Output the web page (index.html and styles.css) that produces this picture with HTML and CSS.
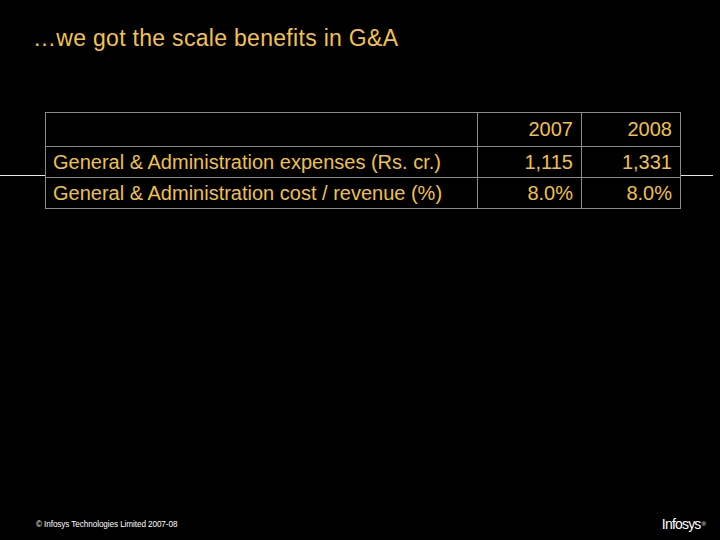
FILE: index.html
```
<!DOCTYPE html>
<html>
<head>
<meta charset="utf-8">
<link rel="stylesheet" href="styles.css">
</head>
<body>
<div class="slide">
  <h1 class="title">…we got the scale benefits in G&amp;A</h1>
  <div class="table-wrap">
    <div class="rule"></div>
    <table class="data">
      <colgroup>
        <col class="c1"><col class="c2"><col class="c3">
      </colgroup>
      <tr class="head"><td></td><td class="num">2007</td><td class="num">2008</td></tr>
      <tr class="row"><td class="label">General &amp; Administration expenses (Rs. cr.)</td><td class="num">1,115</td><td class="num">1,331</td></tr>
      <tr class="row"><td class="label">General &amp; Administration cost / revenue (%)</td><td class="num">8.0%</td><td class="num">8.0%</td></tr>
    </table>
  </div>
  <div class="spacer"></div>
  <footer class="footer">
    <span class="copy">© Infosys Technologies Limited 2007-08</span>
    <span class="logo">Infosys<sup class="reg">®</sup></span>
  </footer>
</div>
</body>
</html>
```
FILE: styles.css
```
html, body {
  margin: 0;
  padding: 0;
  background: #000;
}
.slide {
  width: 720px;
  height: 540px;
  display: flex;
  flex-direction: column;
  font-family: "Liberation Sans", Arial, sans-serif;
  background: #000;
  overflow: hidden;
}
.title {
  margin: 0;
  padding: 25px 0 0 33px;
  font-size: 23px;
  font-weight: normal;
  line-height: 26px;
  letter-spacing: 0.3px;
  color: #f2c24a;
}
.table-wrap {
  position: relative;
  margin: 61px 0 0 45px;
  width: 635px;
}
.rule {
  position: absolute;
  left: -45px;
  top: 63px;
  width: 713px;
  height: 1px;
  background: #e8e8e8;
}
.data {
  position: relative;
  z-index: 1;
  background: #000;
  border-collapse: collapse;
  table-layout: fixed;
  width: 635px;
  font-size: 20px;
  color: #efc04a;
}
.c1 { width: 432px; }
.c2 { width: 104px; }
.c3 { width: 99px; }
.data td {
  border: 1px solid #8a8a8a;
  padding: 0 8px 0 7px;
  white-space: nowrap;
  vertical-align: middle;
}
.head td {
  line-height: 33px;
}
.row td {
  line-height: 30px;
}
.data .num {
  text-align: right;
}
.spacer {
  flex: 1;
}
.footer {
  display: flex;
  justify-content: space-between;
  align-items: center;
  padding: 0 14px 4px 36px;
  height: 24px;
  color: #fff;
}
.copy {
  font-size: 8.2px;
  letter-spacing: -0.1px;
}
.logo {
  font-size: 14px;
  letter-spacing: -0.8px;
  line-height: 14px;
}
.reg {
  font-size: 6px;
  vertical-align: top;
  letter-spacing: 0;
  margin-left: 1px;
}
```
